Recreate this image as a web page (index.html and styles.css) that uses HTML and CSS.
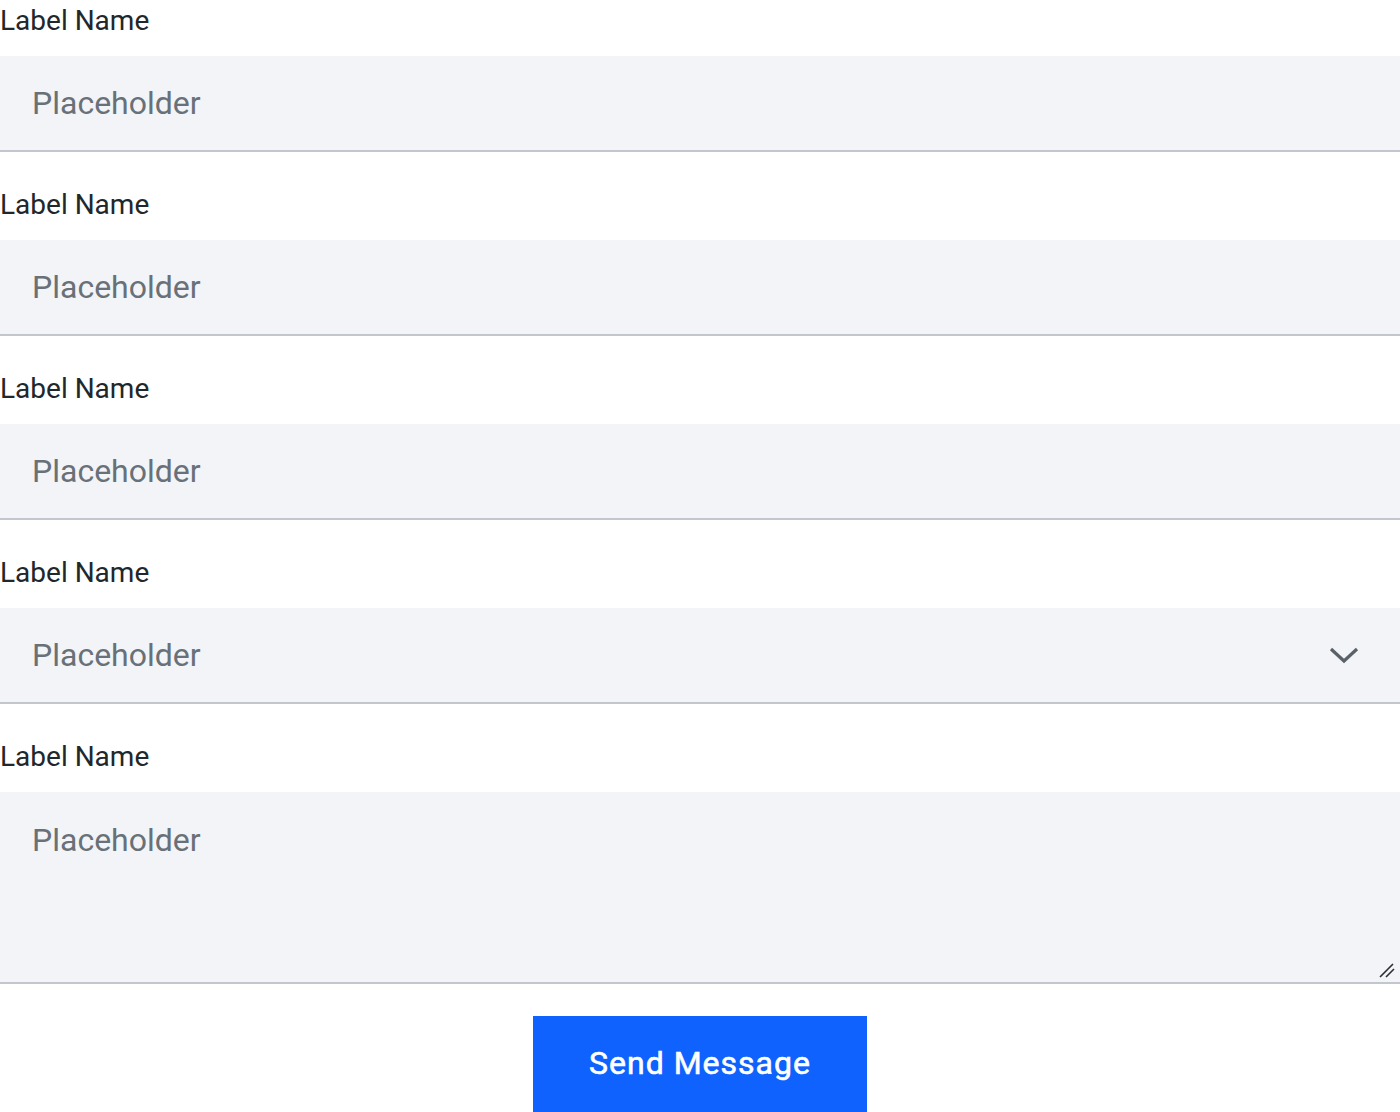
FILE: index.html
```html
<!DOCTYPE html>
<html lang="en">
<head>
<meta charset="utf-8">
<title>Form</title>
<link rel="stylesheet" href="styles.css">
</head>
<body>
<form class="form">
  <div class="field">
    <label class="label" for="f1">Label Name</label>
    <input class="control" id="f1" type="text" placeholder="Placeholder">
  </div>
  <div class="field">
    <label class="label" for="f2">Label Name</label>
    <input class="control" id="f2" type="text" placeholder="Placeholder">
  </div>
  <div class="field">
    <label class="label" for="f3">Label Name</label>
    <input class="control" id="f3" type="text" placeholder="Placeholder">
  </div>
  <div class="field">
    <label class="label" for="f4">Label Name</label>
    <div class="select-wrap">
      <select class="control select" id="f4">
        <option value="" selected>Placeholder</option>
      </select>
      <svg class="chevron" width="30" height="18" viewBox="0 0 30 18" aria-hidden="true">
        <path d="M2 3 L15 15 L28 3" fill="none" stroke="#5a6168" stroke-width="3.2"/>
      </svg>
    </div>
  </div>
  <div class="field">
    <label class="label" for="f5">Label Name</label>
    <div class="textarea-wrap">
      <textarea class="control textarea" id="f5" placeholder="Placeholder"></textarea>
      <svg class="grip" width="16" height="16" viewBox="0 0 16 16" aria-hidden="true">
        <path d="M1 15 L14 2 M7 15 L15 7" fill="none" stroke="#2b2f33" stroke-width="1.6"/>
      </svg>
    </div>
  </div>
  <div class="actions">
    <button class="button" type="button">Send Message</button>
  </div>
</form>
</body>
</html>
```

FILE: styles.css
```css
* { box-sizing: border-box; }
html, body { margin: 0; padding: 0; background: #ffffff; }
body { font-family: Roboto, "Liberation Sans", sans-serif; }

.form {
  display: flex;
  flex-direction: column;
  gap: 32px;
}

.field {
  display: flex;
  flex-direction: column;
}

.label {
  font-size: 28px;
  line-height: 40px;
  padding-top: 1px;
  color: #21272a;
  margin-bottom: 15px;
}

.control {
  display: block;
  width: 100%;
  height: 96px;
  margin: 0;
  padding: 0 32px;
  border: 0;
  border-bottom: 2px solid #c1c7cd;
  border-radius: 0;
  background: #f2f4f8;
  font-family: Roboto, "Liberation Sans", sans-serif;
  font-size: 32px;
  color: #21272a;
  outline: none;
}
.control::placeholder { color: #697077; opacity: 1; }

.select-wrap { position: relative; }
.select {
  appearance: none;
  -webkit-appearance: none;
  color: #697077;
}
.chevron {
  position: absolute;
  right: 41px;
  top: 38px;
  pointer-events: none;
}

.textarea-wrap { position: relative; }
.textarea {
  height: 192px;
  padding: 32px 32px;
  line-height: 32px;
  resize: none;
}
.grip {
  position: absolute;
  right: 5px;
  bottom: 6px;
  pointer-events: none;
}

.actions {
  display: flex;
  justify-content: center;
}
.button {
  height: 96px;
  width: 334px;
  padding: 0 0 2px;
  border: 0;
  border-radius: 0;
  background: #0f62fe;
  color: #ffffff;
  font-family: Roboto, "Liberation Sans", sans-serif;
  font-size: 32px;
  font-weight: 400;
  -webkit-text-stroke: 0.6px #ffffff;
  letter-spacing: 1px;
  cursor: pointer;
}
```
